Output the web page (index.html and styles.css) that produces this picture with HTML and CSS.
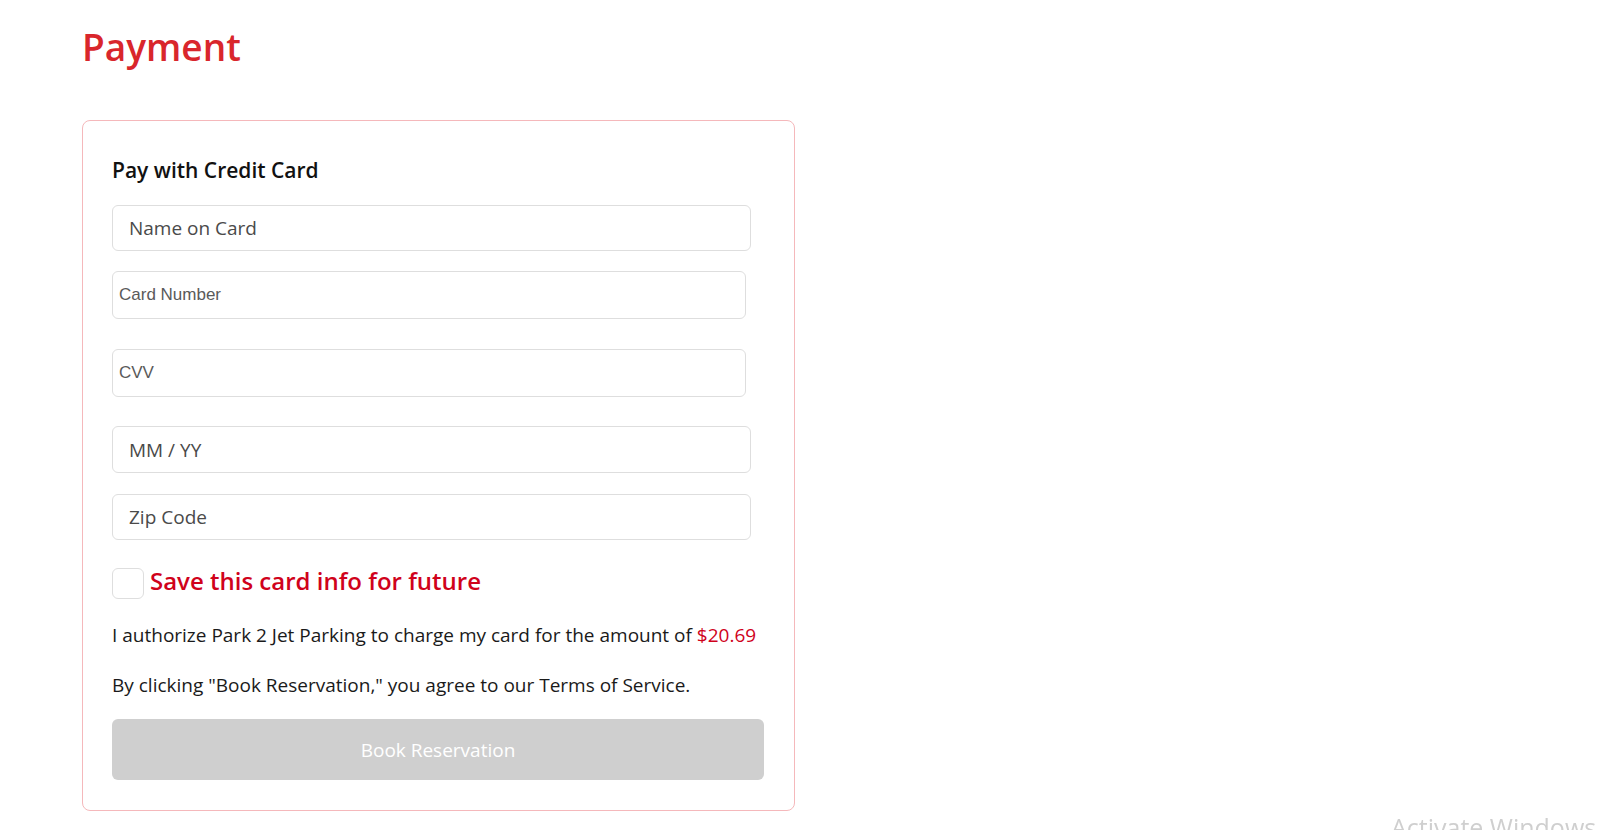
FILE: index.html
```html
<!DOCTYPE html>
<html lang="en">

<head>
    <meta charset="UTF-8">
    <meta name="viewport" content="width=device-width, initial-scale=1.0">
    <title>Payment</title>
    <link rel="stylesheet" href="styles.css">
</head>

<body>
    <main class="page">
        <h1 class="page-title">Payment</h1>

        <form class="pay-card">
            <h2 class="pay-title">Pay with Credit Card</h2>

            <input class="field field-name" type="text" placeholder="Name on Card">
            <input class="field field-stripe field-number" type="text" placeholder="Card Number">
            <input class="field field-stripe field-cvv" type="text" placeholder="CVV">
            <input class="field field-exp" type="text" placeholder="MM / YY">
            <input class="field field-zip" type="text" placeholder="Zip Code">

            <label class="save-row">
                <input class="save-check" type="checkbox">
                <span class="save-text">Save this card info for future</span>
            </label>

            <p class="note note-auth">I authorize Park 2 Jet Parking to charge my card for the amount of <span class="amount">$20.69</span></p>
            <p class="note note-terms">By clicking "Book Reservation," you agree to our Terms of Service.</p>

            <button class="book-btn" type="button" disabled>Book Reservation</button>
        </form>
    </main>

    <div class="watermark">Activate Windows</div>
</body>

</html>
```

FILE: styles.css
```css
body {
    margin: 0;
    background: #fff;
    font-family: "Open Sans", "Noto Sans", sans-serif;
    color: #222;
}

.page {
    padding: 0 0 0 82px;
}

.page-title {
    margin: 23px 0 50px 0;
    font-size: 37px;
    line-height: 47px;
    font-weight: 600;
    color: #d9262c;
}

.pay-card {
    box-sizing: border-box;
    width: 713px;
    display: flex;
    flex-direction: column;
    align-items: flex-start;
    padding: 35px 30px 30px 29px;
    border: 1px solid #f5b8bb;
    border-radius: 8px;
}

.pay-title {
    margin: 0 0 21px 0;
    font-size: 21px;
    line-height: 28px;
    font-weight: 600;
    color: #111;
}

.field {
    box-sizing: border-box;
    width: 639px;
    height: 46px;
    margin: 0;
    padding: 0 16px;
    border: 1px solid #dedede;
    border-radius: 6px;
    font-family: "Open Sans", sans-serif;
    font-size: 19px;
    color: #333;
    background: #fff;
    outline: none;
}

.field::placeholder {
    color: #4a4a4a;
}

.field-stripe {
    width: 634px;
    height: 48px;
    padding: 0 6px;
    font-family: "Liberation Sans", Arial, sans-serif;
    font-size: 17px;
}

.field-stripe::placeholder {
    color: #5a5a5a;
}

.field-number {
    margin-top: 20px;
}

.field-cvv {
    margin-top: 30px;
}

.field-exp {
    margin-top: 29px;
    height: 47px;
}

.field-zip {
    margin-top: 21px;
}

.save-row {
    display: flex;
    align-items: flex-start;
    gap: 6px;
    margin-top: 28px;
    cursor: pointer;
}

.save-check {
    appearance: none;
    -webkit-appearance: none;
    box-sizing: border-box;
    width: 32px;
    height: 31px;
    margin: 0;
    border: 1px solid #dedede;
    border-radius: 6px;
    background: #fff;
}

.save-text {
    font-size: 24px;
    line-height: 25px;
    font-weight: 600;
    color: #d0021b;
}

.note {
    margin: 22px 0 0 0;
    font-size: 19px;
    line-height: 28px;
    color: #1a1a1a;
}

.amount {
    color: #d0021b;
}

.book-btn {
    width: 652px;
    height: 61px;
    margin-top: 20px;
    border: none;
    border-radius: 6px;
    background: #cfcfcf;
    color: #fff;
    font-family: "Open Sans", sans-serif;
    font-size: 19px;
}

.watermark {
    position: fixed;
    left: 1391px;
    top: 810px;
    font-family: "Open Sans", sans-serif;
    font-size: 25px;
    color: #cfcfcf;
    white-space: nowrap;
}
```
